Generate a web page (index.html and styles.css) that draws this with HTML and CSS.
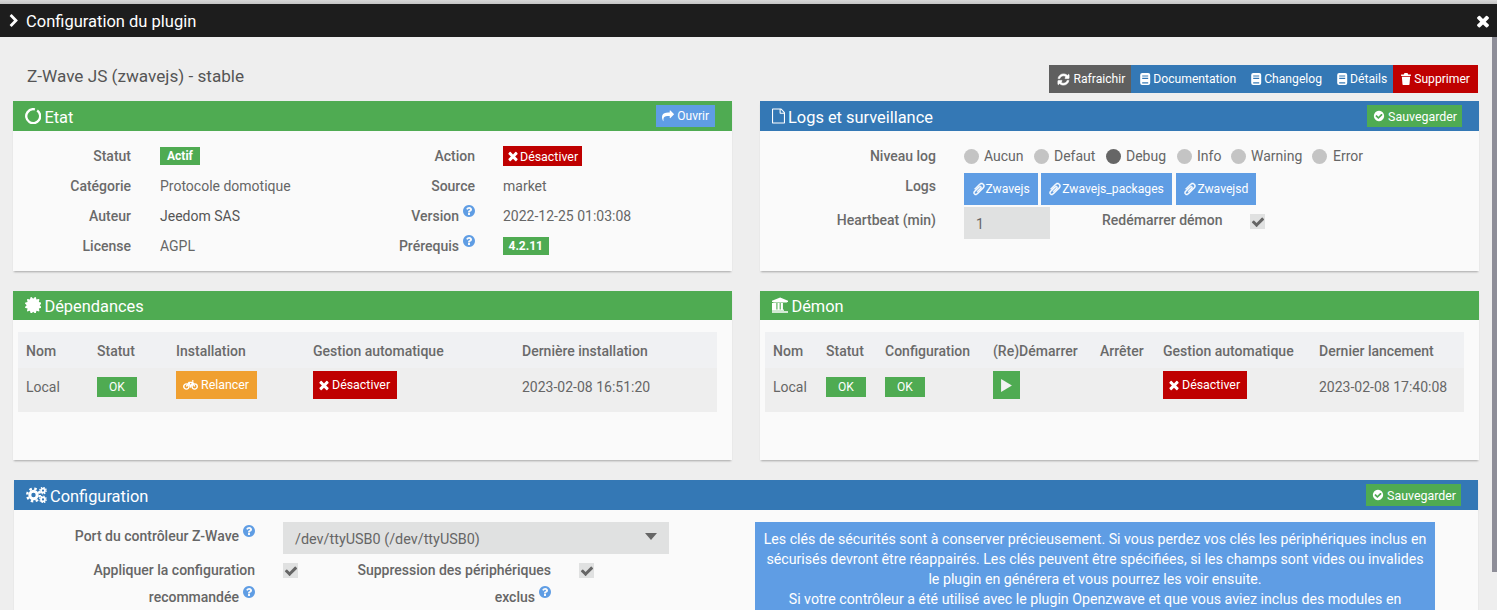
FILE: index.html
```html
<!DOCTYPE html>
<html lang="fr">
<head>
<meta charset="utf-8">
<title>Configuration du plugin</title>
<link rel="stylesheet" href="styles.css">
</head>
<body>
<svg class="sprite" aria-hidden="true">
  <symbol id="i-chevron" viewBox="0 0 1792 1792"><path d="M1363 877l-742 742q-19 19-45 19t-45-19l-166-166q-19-19-19-45t19-45l531-531-531-531q-19-19-19-45t19-45l166-166q19-19 45-19t45 19l742 742q19 19 19 45t-19 45z"/></symbol>
  <symbol id="i-times" viewBox="0 0 1792 1792"><path d="M1490 1322q0 40-28 68l-136 136q-28 28-68 28t-68-28l-294-294-294 294q-28 28-68 28t-68-28l-136-136q-28-28-28-68t28-68l294-294-294-294q-28-28-28-68t28-68l136-136q28-28 68-28t68 28l294 294 294-294q28-28 68-28t68 28l136 136q28 28 28 68t-28 68l-294 294 294 294q28 28 28 68z"/></symbol>
  <symbol id="i-refresh" viewBox="0 0 1792 1792"><path stroke="currentColor" stroke-width="90" d="M1639 1056q0 5-1 7-64 268-268 434.5t-478 166.5q-146 0-282.5-55t-243.5-157l-129 129q-19 19-45 19t-45-19-19-45v-448q0-26 19-45t45-19h448q26 0 45 19t19 45-19 45l-137 137q71 66 161 102t187 36q134 0 250-65t186-179q11-17 53-117 8-23 30-23h192q13 0 22.5 9.5t9.5 22.5zm25-800v448q0 26-19 45t-45 19h-448q-26 0-45-19t-19-45 19-45l138-138q-148-137-349-137-134 0-250 65t-186 179q-11 17-53 117-8 23-30 23h-199q-13 0-22.5-9.5t-9.5-22.5v-7q65-268 270-434.5t480-166.5q146 0 284 55.5t245 156.5l130-129q19-19 45-19t45 19 19 45z"/></symbol>
  <symbol id="i-book" viewBox="0 0 13 15"><path fill-rule="evenodd" d="M3 0h7.500a2.500 2.500 0 0 1 2.500 2.500v10a2.500 2.500 0 0 1-2.500 2.500H3a2.500 2.500 0 0 1-2.500-2.500v-10A2.500 2.500 0 0 1 3 0zm0 3v1.500h7.500V3zm0 3v1.500h7.500V6zm0 5.500V13h7.500v-1.500z"/></symbol>
  <symbol id="i-trash" viewBox="0 0 14 16"><path d="M5 0h4l1 2h3.500v2H.500V2H4zM1.500 5h11l-.8 10a1 1 0 0 1-1 1H3.300a1 1 0 0 1-1-1z"/></symbol>
  <symbol id="i-share" viewBox="0 0 1792 1792"><path d="M1792 640q0 26-19 45l-512 512q-19 19-45 19t-45-19-19-45v-256h-224q-98 0-175.500 6t-154 21.500-133 42.500-105.500 69.500-80 101-48.500 138.500-17.500 181q0 55 5 123 0 6 2.500 23.500t2.500 26.500q0 15-8.500 25t-23.500 10q-16 0-28-17-7-9-13-22t-13.500-30-10.500-24q-127-285-127-451 0-199 53-333 162-403 875-403h224v-256q0-26 19-45t45-19 45 19l512 512q19 19 19 45z"/></symbol>
  <symbol id="i-clip" viewBox="0 0 1792 1792"><path transform="matrix(-1 0 0 1 1792 0)" stroke="currentColor" stroke-width="70" d="M1596 1385q0 117-79 196t-196 79q-135 0-235-100l-777-776q-113-115-113-271 0-159 110-270t269-111q158 0 273 113l605 606q10 10 10 22 0 16-30.500 46.500t-46.500 30.500q-13 0-23-10l-606-607q-79-77-181-77-106 0-179 75t-73 181q0 105 76 181l776 777q63 63 145 63 64 0 106-42t42-106q0-82-63-145l-581-581q-26-24-60-24-29 0-48 19t-19 48q0 32 25 59l410 410q10 10 10 22 0 16-31 47t-47 31q-12 0-22-10l-410-410q-63-61-63-149 0-82 57-139t139-57q88 0 149 63l581 581q100 98 100 235z"/></symbol>
  <symbol id="i-check-circle" viewBox="0 0 1792 1792"><path d="M1412 734q0-28-18-46l-91-90q-19-19-45-19t-45 19l-408 407-226-226q-19-19-45-19t-45 19l-91 90q-18 18-18 46 0 27 18 45l362 362q19 19 45 19 27 0 46-19l543-543q18-18 18-45zm252 162q0 209-103 385.500t-279.500 279.500-385.500 103-385.500-103-279.500-279.500-103-385.500 103-385.500 279.500-279.500 385.500-103 385.500 103 279.500 279.500 103 385.500z"/></symbol>
  <symbol id="i-question" viewBox="128 128 1536 1536"><path d="M1024 1376v-192q0-14-9-23t-23-9h-192q-14 0-23 9t-9 23v192q0 14 9 23t23 9h192q14 0 23-9t9-23zm256-672q0-88-55.500-163t-138.500-116-170-41q-243 0-371 213-15 24 8 42l132 100q7 6 19 6 16 0 25-12 53-68 86-92 34-24 86-24 48 0 85.500 26t37.500 59q0 38-20 61t-68 45q-63 28-115.500 86.500t-52.500 125.500v36q0 14 9 23t23 9h192q14 0 23-9t9-23q0-19 21.500-49.500t54.500-49.500q32-18 49-28.500t46-35 44.500-48 28-60.500 12.500-81zm384 192q0 209-103 385.500t-279.500 279.500-385.500 103-385.500-103-279.500-279.500-103-385.500 103-385.500 279.500-279.500 385.500-103 385.500 103 279.500 279.500 103 385.500z"/></symbol>
  <symbol id="i-check" viewBox="0 0 1792 1792"><path d="M1671 566q0 40-28 68l-724 724-136 136q-28 28-68 28t-68-28l-136-136-362-362q-28-28-28-68t28-68l136-136q28-28 68-28t68 28l294 295 656-657q28-28 68-28t68 28l136 136q28 28 28 68z"/></symbol>
  <symbol id="i-notch" viewBox="0 0 16 16"><circle cx="8" cy="8" r="6.800" fill="none" stroke="currentColor" stroke-width="2.300" stroke-dasharray="40 2.700" transform="rotate(-55 8 8)"/></symbol>
  <symbol id="i-file" viewBox="128 0 1536 1792"><path d="M1596 380q28 28 48 76t20 88v1152q0 40-28 68t-68 28h-1344q-40 0-68-28t-28-68v-1600q0-40 28-68t68-28h896q40 0 88 20t76 48zm-444-244v376h376q-10-29-22-41l-313-313q-12-12-41-22zm384 1528v-1024h-416q-40 0-68-28t-28-68v-416h-768v1536h1280z"/></symbol>
  <symbol id="i-cert" viewBox="128 128 1536 1536"><path d="M1504 896l138 135q30 28 20 70-12 41-52 51l-188 48 53 186q12 41-19 70-29 31-70 19l-186-53-48 188q-10 40-51 52-12 2-19 2-31 0-51-22l-135-138-135 138q-28 30-70 20-41-11-51-52l-48-188-186 53q-41 12-70-19-31-29-19-70l53-186-188-48q-40-10-52-51-10-42 20-70l138-135-138-135q-30-28-20-70 12-41 52-51l188-48-53-186q-12-41 19-70 29-31 70-19l186 53 48-188q10-41 51-51 41-12 70 19l135 139 135-139q29-30 70-19 41 10 51 51l48 188 186-53q41-12 70 19 31 29 19 70l-53 186 188 48q40 10 52 51 10 42-20 70z"/></symbol>
  <symbol id="i-bank" viewBox="0 0 1920 1792"><path d="M960 0l960 384v128h-128q0 26-20.500 45t-48.500 19h-1526q-28 0-48.500-19t-20.500-45h-128v-128zm-704 640h256v768h128v-768h256v768h128v-768h256v768h59q28 0 48.500 19t20.500 45v64h-1664v-64q0-26 20.500-45t48.500-19h59v-768zm1595 960q28 0 48.500 19t20.500 45v128h-1920v-128q0-26 20.500-45t48.500-19h1782z"/></symbol>
  <symbol id="i-cogs" viewBox="0 0 21 16">
    <g fill="none" stroke="currentColor">
      <circle cx="7.500" cy="8" r="3.700" stroke-width="3"/>
      <circle cx="7.500" cy="8" r="6.300" stroke-width="2.400" stroke-dasharray="2.500 2.448"/>
      <circle cx="17" cy="3.600" r="2" stroke-width="1.700"/>
      <circle cx="17" cy="3.600" r="3.200" stroke-width="1.300" stroke-dasharray="1.300 1.213"/>
      <circle cx="17" cy="12.400" r="2" stroke-width="1.700"/>
      <circle cx="17" cy="12.400" r="3.200" stroke-width="1.300" stroke-dasharray="1.300 1.213"/>
    </g>
  </symbol>
  <symbol id="i-bike" viewBox="0 0 20 14">
    <g fill="none" stroke="currentColor" stroke-width="1.900">
      <circle cx="4.500" cy="9" r="3.500"/>
      <circle cx="15.500" cy="9" r="3.500"/>
      <path d="M4.500 9L8 3.500h5L15.500 9M8 3.500L10 9l3-5.500M12 1.500h2"/>
    </g>
  </symbol>
</svg>

<div class="topline"></div>
<header class="modal-head">
  <div class="modal-title"><svg class="ico chevron"><use href="#i-chevron"/></svg><span>Configuration du plugin</span></div>
  <svg class="ico close"><use href="#i-times"/></svg>
</header>

<div class="modal-body">
  <main class="content">
    <div class="titlebar">
      <h1 class="plugin-name">Z-Wave JS (zwavejs) - stable</h1>
      <div class="actions">
        <a class="btn dark"><svg class="ico"><use href="#i-refresh"/></svg>Rafraichir</a>
        <a class="btn primary"><svg class="ico"><use href="#i-book"/></svg>Documentation</a>
        <a class="btn primary"><svg class="ico"><use href="#i-book"/></svg>Changelog</a>
        <a class="btn primary"><svg class="ico"><use href="#i-book"/></svg>Détails</a>
        <a class="btn red"><svg class="ico"><use href="#i-trash"/></svg>Supprimer</a>
      </div>
    </div>

    <div class="panels">
      <section class="panel short">
        <div class="panel-head green">
          <h2><svg class="ico"><use href="#i-notch"/></svg>Etat</h2>
          <a class="btn-head sky"><svg class="ico"><use href="#i-share"/></svg>Ouvrir</a>
        </div>
        <div class="state-grid">
          <span class="lbl">Statut</span><span><span class="tag">Actif</span></span>
          <span class="lbl">Action</span><span><a class="btn-small red"><svg class="ico"><use href="#i-times"/></svg>Désactiver</a></span>
          <span class="lbl">Catégorie</span><span>Protocole domotique</span>
          <span class="lbl">Source</span><span>market</span>
          <span class="lbl">Auteur</span><span class="strong">Jeedom SAS</span>
          <span class="lbl">Version<svg class="ico help"><use href="#i-question"/></svg></span><span>2022-12-25 01:03:08</span>
          <span class="lbl">License</span><span>AGPL</span>
          <span class="lbl">Prérequis<svg class="ico help"><use href="#i-question"/></svg></span><span><span class="tag ver">4.2.11</span></span>
        </div>
      </section>

      <section class="panel short">
        <div class="panel-head blue">
          <h2><svg class="ico file"><use href="#i-file"/></svg>Logs et surveillance</h2>
          <a class="btn-head save"><svg class="ico"><use href="#i-check-circle"/></svg>Sauvegarder</a>
        </div>
        <div class="logs-grid">
          <span class="lbl">Niveau log</span>
          <div class="radios">
            <label class="radio r-aucun"><i></i>Aucun</label>
            <label class="radio r-defaut"><i></i>Defaut</label>
            <label class="radio r-debug on"><i></i>Debug</label>
            <label class="radio r-info"><i></i>Info</label>
            <label class="radio r-warning"><i></i>Warning</label>
            <label class="radio r-error"><i></i>Error</label>
          </div>
          <span class="lbl logs-lbl">Logs</span>
          <div class="log-btns">
            <a class="btn-log"><svg class="ico"><use href="#i-clip"/></svg>Zwavejs</a>
            <a class="btn-log"><svg class="ico"><use href="#i-clip"/></svg>Zwavejs_packages</a>
            <a class="btn-log"><svg class="ico"><use href="#i-clip"/></svg>Zwavejsd</a>
          </div>
          <span class="lbl up">Heartbeat (min)</span>
          <div class="heart-row">
            <input class="field" value="1">
            <span class="lbl restart up">Redémarrer démon</span>
            <span class="check"><svg class="ico"><use href="#i-check"/></svg></span>
          </div>
        </div>
      </section>

      <section class="panel tall">
        <div class="panel-head green">
          <h2><svg class="ico"><use href="#i-cert"/></svg>Dépendances</h2>
        </div>
        <table class="tbl dep">
          <thead><tr><th>Nom</th><th>Statut</th><th>Installation</th><th>Gestion automatique</th><th>Dernière installation</th></tr></thead>
          <tbody><tr>
            <td>Local</td>
            <td><span class="ok">OK</span></td>
            <td><a class="btn-cell orange"><svg class="ico"><use href="#i-bike"/></svg>Relancer</a></td>
            <td><a class="btn-cell red"><svg class="ico"><use href="#i-times"/></svg>Désactiver</a></td>
            <td>2023-02-08 16:51:20</td>
          </tr></tbody>
        </table>
      </section>

      <section class="panel tall">
        <div class="panel-head green">
          <h2><svg class="ico"><use href="#i-bank"/></svg>Démon</h2>
        </div>
        <table class="tbl dem">
          <thead><tr><th>Nom</th><th>Statut</th><th>Configuration</th><th>(Re)Démarrer</th><th>Arrêter</th><th>Gestion automatique</th><th>Dernier lancement</th></tr></thead>
          <tbody><tr>
            <td>Local</td>
            <td><span class="ok">OK</span></td>
            <td><span class="ok">OK</span></td>
            <td><a class="btn-cell play"><svg viewBox="0 0 10 12"><path d="M0 0l10 6-10 6z"/></svg></a></td>
            <td></td>
            <td><a class="btn-cell red"><svg class="ico"><use href="#i-times"/></svg>Désactiver</a></td>
            <td>2023-02-08 17:40:08</td>
          </tr></tbody>
        </table>
      </section>
    </div>

    <section class="panel config">
      <div class="panel-head blue">
        <h2><svg class="ico cogs"><use href="#i-cogs"/></svg>Configuration</h2>
        <a class="btn-head save"><svg class="ico"><use href="#i-check-circle"/></svg>Sauvegarder</a>
      </div>
      <div class="config-body">
        <div class="config-form">
          <span class="cfg-lbl port">Port du contrôleur Z-Wave<svg class="ico help"><use href="#i-question"/></svg></span>
          <div class="select"><span>/dev/ttyUSB0 (/dev/ttyUSB0)</span><i></i></div>
          <span class="cfg-lbl">Appliquer la configuration<br>recommandée<svg class="ico help"><use href="#i-question"/></svg></span>
          <span class="check"><svg class="ico"><use href="#i-check"/></svg></span>
          <span class="cfg-lbl">Suppression des périphériques<br>exclus<svg class="ico help"><use href="#i-question"/></svg></span>
          <span class="check"><svg class="ico"><use href="#i-check"/></svg></span>
        </div>
        <div class="info">Les clés de sécurités sont à conserver précieusement. Si vous perdez vos clés les périphériques inclus en sécurisés devront être réappairés. Les clés peuvent être spécifiées, si les champs sont vides ou invalides le plugin en générera et vous pourrez les voir ensuite.<br>Si votre contrôleur a été utilisé avec le plugin Openzwave et que vous aviez inclus des modules en</div>
      </div>
    </section>
  </main>
  <div class="scrollbar"><div class="thumb"></div></div>
</div>
</body>
</html>
```
FILE: styles.css
```css
* { box-sizing: border-box; }
html, body { height: 100%; }
body {
  margin: 0;
  height: 610px;
  overflow: hidden;
  display: flex;
  flex-direction: column;
  background: #eeeeee;
  color: #666666;
  font-family: Roboto, "Liberation Sans", sans-serif;
  font-size: 14px;
}
.sprite { display: none; }
.ico { width: 1em; height: 1em; fill: currentColor; flex: none; }
h1, h2 { margin: 0; font-weight: 400; }
a { display: inline-flex; align-items: center; }

.topline { height: 4px; flex: none; background: linear-gradient(#d8d8d8, #c4c4c4); }
.modal-head {
  height: 33px;
  flex: none;
  display: flex;
  align-items: center;
  justify-content: space-between;
  padding: 1px 5px 0 7px;
  background: #1d1d1d;
  color: #ffffff;
}
.modal-title { display: flex; align-items: center; gap: 5px; font-size: 16.500px; }
.chevron { width: 14px; height: 14px; }
.close { width: 18px; height: 18px; }

.modal-body { flex: 1; display: flex; min-height: 0; }
.content { flex: 1; min-width: 0; overflow: hidden; padding: 0 13px; }
.scrollbar { width: 5px; flex: none; }
.thumb { height: 535px; background: #8e8e98; }

.titlebar {
  height: 64px;
  display: flex;
  align-items: flex-end;
  justify-content: space-between;
  padding: 0 1px 8px 14px;
}
.plugin-name { font-size: 17.150px; line-height: 20px; margin-bottom: 7px; color: #555555; }
.actions { display: flex; }
.btn {
  height: 28px;
  gap: 2px;
  font-size: 12.150px;
  color: #ffffff;
}
.btn .ico { width: 12px; height: 12px; }
.btn.dark { background: #5f5f5f; padding: 0 6px 0 8px; gap: 3px; }
.btn.dark .ico { width: 13px; height: 13px; }
.btn.primary { background: #3478b5; padding: 0 6px 0 8px; }
.red { background: #bf0000; }
.btn.red { padding: 0 8px 0 7px; }

.panels {
  display: grid;
  grid-template-columns: 719px 719px;
  column-gap: 28px;
  row-gap: 20px;
}
.panel { background: #fafafa; box-shadow: 0 2px 2px -1px rgba(0, 0, 0, .3); }
.short { height: 170px; }
.tall { height: 169px; }
.panel-head {
  height: 30px;
  display: flex;
  align-items: center;
  justify-content: space-between;
  padding: 0 17px 0 12px;
  color: #ffffff;
}
.panel-head h2 { display: flex; align-items: center; gap: 3px; font-size: 16.400px; padding-top: 2px; }
.panel-head h2 .ico { margin-top: -2px; }
.tall .panel-head { height: 29px; }
.tall .panel-head h2 { padding-top: 1px; }
.file { width: 13px; height: 16px; }
.cogs { width: 21px; height: 16px; }
.green { background: #4fab52; }
.blue { background: #3478b5; }
.btn-head {
  height: 22px;
  padding: 0 6px;
  gap: 3px;
  font-size: 12px;
  color: #ffffff;
}
.btn-head .ico { width: 12px; height: 12px; }
.sky { background: #5f9de4; }
.btn-head.save { background: #4fab52; font-size: 12.400px; padding-right: 5px; }

.lbl { text-align: right; font-weight: 500; color: #6a6a6a; }
.strong { color: #555555; }
.help {
  width: 12px;
  height: 12px;
  margin: -6px 0 0 4px;
  vertical-align: 4px;
  color: #5f9de4;
}

.state-grid {
  display: grid;
  grid-template-columns: 118px 213px 131px 1fr;
  grid-auto-rows: 30px;
  align-items: center;
  padding-top: 10px;
}
.state-grid > :nth-child(even) { padding-left: 28px; }
.state-grid > :nth-child(4n+2) { padding-left: 29px; }
.tag {
  display: inline-block;
  padding: 0 7px;
  line-height: 18px;
  background: #4fab52;
  color: #ffffff;
  font-size: 12px;
  font-weight: 700;
  vertical-align: middle;
}
.tag.ver { padding: 0 5.500px; }
.btn-small {
  height: 20px;
  padding: 0 4px 0 3px;
  font-size: 12.400px;
  color: #ffffff;
  vertical-align: middle;
}
.btn-small .ico { width: 14px; height: 14px; }

.logs-grid {
  display: grid;
  grid-template-columns: 176px 1fr;
  column-gap: 28px;
  align-items: center;
  padding-top: 10px;
}
.radios { display: flex; height: 30px; align-items: center; }
.radio { display: flex; align-items: center; gap: 5px; }
.radio i { width: 15px; height: 15px; border-radius: 50%; background: #c4c4c4; }
.radio.on i { background: #666666; }
.r-aucun { width: 70px; }
.r-defaut { width: 72px; }
.r-debug { width: 71px; }
.r-info { width: 54px; }
.r-warning { width: 81px; }
.r-error { gap: 6px; }
.log-btns { display: flex; gap: 3px; height: 36px; padding-top: 2px; }
.btn-log {
  height: 32px;
  padding: 0 8px 0 7.500px;
  font-size: 12.150px;
  background: #5f9de4;
  color: #ffffff;
}
.btn-log .ico { width: 14px; height: 14px; }
.btn-log:nth-child(3) { margin-left: 1px; }
.logs-lbl { align-self: start; line-height: 30px; }
.up { align-self: start; line-height: 26px; }
.heart-row { display: flex; align-items: flex-start; }
.field {
  width: 86px;
  height: 32px;
  border: 0;
  padding: 2px 12px 0;
  background: #e0e1e1;
  color: #666666;
  font: inherit;
}
.restart { margin-left: 52px; }
.check {
  width: 15px;
  height: 15px;
  display: flex;
  align-items: center;
  justify-content: center;
  background: #e0e1e1;
  color: #666666;
}
.check .ico { width: 14px; height: 14px; }
.heart-row .check { margin: 7px 0 0 28px; }

.tbl {
  table-layout: fixed;
  border-collapse: collapse;
  width: 699px;
  margin: 12px 0 0 5px;
}
.tbl th, .tbl td { padding: 0 8px; text-align: left; }
.tbl th { height: 36px; padding-top: 2px; background: #f0f1f3; font-weight: 500; color: #6a6a6a; }
.tbl td { height: 44px; padding-top: 9px; vertical-align: top; line-height: 20px; background: #eeeeee; }
.dep th:nth-child(1) { width: 71px; }
.dep th:nth-child(2) { width: 79px; }
.dep th:nth-child(3) { width: 137px; }
.dep th:nth-child(4) { width: 209px; }
.dem th:nth-child(1) { width: 53px; }
.dem th:nth-child(2) { width: 59px; }
.dem th:nth-child(3) { width: 108px; }
.dem th:nth-child(4) { width: 107px; }
.dem th:nth-child(5) { width: 63px; }
.dem th:nth-child(6) { width: 156px; }
.ok {
  display: block;
  width: 40px;
  line-height: 20px;
  background: #4fab52;
  color: #ffffff;
  font-size: 12px;
  text-align: center;
}
.btn-cell {
  height: 28px;
  margin-top: -6px;
  padding: 0 7px 0 4px;
  gap: 1px;
  font-size: 12.400px;
  color: #ffffff;
  vertical-align: top;
}
.btn-cell .ico { width: 14px; height: 14px; }
.btn-cell.orange { background: #f0a030; padding: 0 8px 0 7px; gap: 3px; }
.btn-cell.orange .ico { width: 15px; height: 12px; }
.btn-cell.play { width: 27px; justify-content: center; background: #4fab52; padding: 0; }
.btn-cell.play svg { width: 11px; height: 13px; fill: #f2f2f2; }

.config { margin: 20px 1px 0; height: 200px; }
.config-body { display: flex; height: 170px; padding-top: 12px; }
.config-form {
  width: 655px;
  display: grid;
  grid-template-columns: 241px 15px 225px 90px;
  column-gap: 28px;
  row-gap: 3px;
  align-content: start;
  flex: none;
}
.cfg-lbl { text-align: right; line-height: 27px; color: #666666; font-weight: 500; }
.cfg-lbl.port { padding-top: 1px; }
.config-form > .check { margin-top: 6px; }
.select {
  grid-column: 2 / -1;
  height: 32px;
  display: flex;
  align-items: center;
  justify-content: space-between;
  padding: 2px 12px 0;
  font-size: 14.400px;
  background: #e0e1e1;
}
.select i {
  width: 0;
  height: 0;
  margin: -6px 0 0;
  border-left: 6px solid transparent;
  border-right: 6px solid transparent;
  border-top: 7px solid #666666;
}
.info {
  width: 680px;
  margin-left: 86px;
  padding: 7px;
  flex: none;
  background: #5f9de4;
  color: #ffffff;
  text-align: center;
  font-size: 14.200px;
  line-height: 20px;
}
```
